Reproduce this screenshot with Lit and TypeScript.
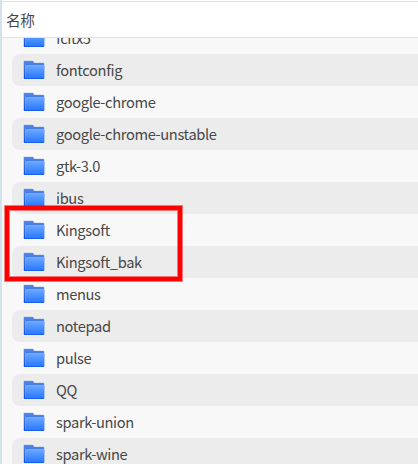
import { LitElement, html, css, svg } from "lit";
import { customElement, property } from "lit/decorators.js";

@customElement("folder-icon")
class FolderIcon extends LitElement {
  static styles = css`
    :host { display: block; width: 22px; height: 20px; }
    svg { display: block; }
  `;
  render() {
    return html`<svg width="22" height="20" viewBox="0 0 22 20">
      ${svg`
        <defs>
          <linearGradient id="back" x1="0" y1="0" x2="0" y2="1">
            <stop offset="0" stop-color="#4f87ea" />
            <stop offset="0.35" stop-color="#3f78e0" />
            <stop offset="1" stop-color="#1248dc" />
          </linearGradient>
          <linearGradient id="front" x1="0" y1="0" x2="0" y2="1">
            <stop offset="0" stop-color="#6aa6ff" />
            <stop offset="1" stop-color="#2678fd" />
          </linearGradient>
        </defs>
        <path d="M0 1.5Q0 .5 1 .5H10L11.5 2.5H20.5Q21.5 2.5 21.5 3.5V19H0Z" fill="#a9c5ef" opacity=".65" />
        <path d="M1 1H9.8L11.3 3H20.2Q21 3 21 4V19H1Z" fill="url(#back)" />
        <path d="M2 6Q2 5 3 5H21Q22 5 22 6V18H2Z" fill="#8dbbfb" opacity=".7" />
        <path d="M2.5 6H21V18.4H2.5Z" fill="url(#front)" />
        <path d="M1 18.4H21V19H1Z" fill="#1e5ff0" />
      `}
    </svg>`;
  }
}

@customElement("file-row")
class FileRow extends LitElement {
  @property() name = "";
  static styles = css`
    :host {
      display: flex;
      align-items: center;
      gap: 11px;
      box-sizing: border-box;
      height: 32px;
      flex: none;
      padding-left: 11px;
      border-radius: 8px 0 0 8px;
    }
    .name { line-height: 32px; white-space: nowrap; }
  `;
  render() {
    return html`<folder-icon></folder-icon><span class="name">${this.name}</span>`;
  }
}

@customElement("app-root")
class AppRoot extends LitElement {
  static styles = css`
    :host {
      display: flex;
      flex-direction: column;
      position: relative;
      box-sizing: border-box;
      width: 418px;
      height: 464px;
      overflow: hidden;
      border-left: 2px solid #d3e3ec;
      background: #f8f8f8;
      color: #484848;
      font: 14.67px "Noto Sans CJK SC", sans-serif;
      letter-spacing: -0.36px;
    }
    .header {
      box-sizing: border-box;
      flex: none;
      height: 38px;
      padding-top: 1px;
      background: #fff;
      border-bottom: 1px solid #e1e1e1;
    }
    .title {
      border-top: 1px solid #e1e1e1;
      padding-left: 4px;
      line-height: 36px;
    }
    .viewport { flex: 1; min-height: 0; overflow: hidden; }
    .list {
      display: flex;
      flex-direction: column;
      margin-top: -16px;
      padding-left: 10px;
    }
    file-row:nth-child(even) { background: #ececec; }
    .highlight {
      position: absolute;
      left: 3px;
      top: 206px;
      width: 177px;
      height: 75px;
      box-sizing: border-box;
      border: 4px solid #ff0000;
      box-shadow: 0 0 0 1px rgba(255, 0, 0, 0.5), inset 0 0 0 1px rgba(255, 0, 0, 0.5);
    }
  `;
  private names = [
    "fcitx5", "fontconfig", "google-chrome", "google-chrome-unstable", "gtk-3.0",
    "ibus", "Kingsoft", "Kingsoft_bak", "menus", "notepad", "pulse", "QQ",
    "spark-union", "spark-wine",
  ];
  render() {
    return html`
      <div class="header"><div class="title">名称</div></div>
      <div class="viewport">
        <div class="list">
          ${this.names.map((n) => html`<file-row .name=${n}></file-row>`)}
        </div>
      </div>
      <div class="highlight"></div>
    `;
  }
}
